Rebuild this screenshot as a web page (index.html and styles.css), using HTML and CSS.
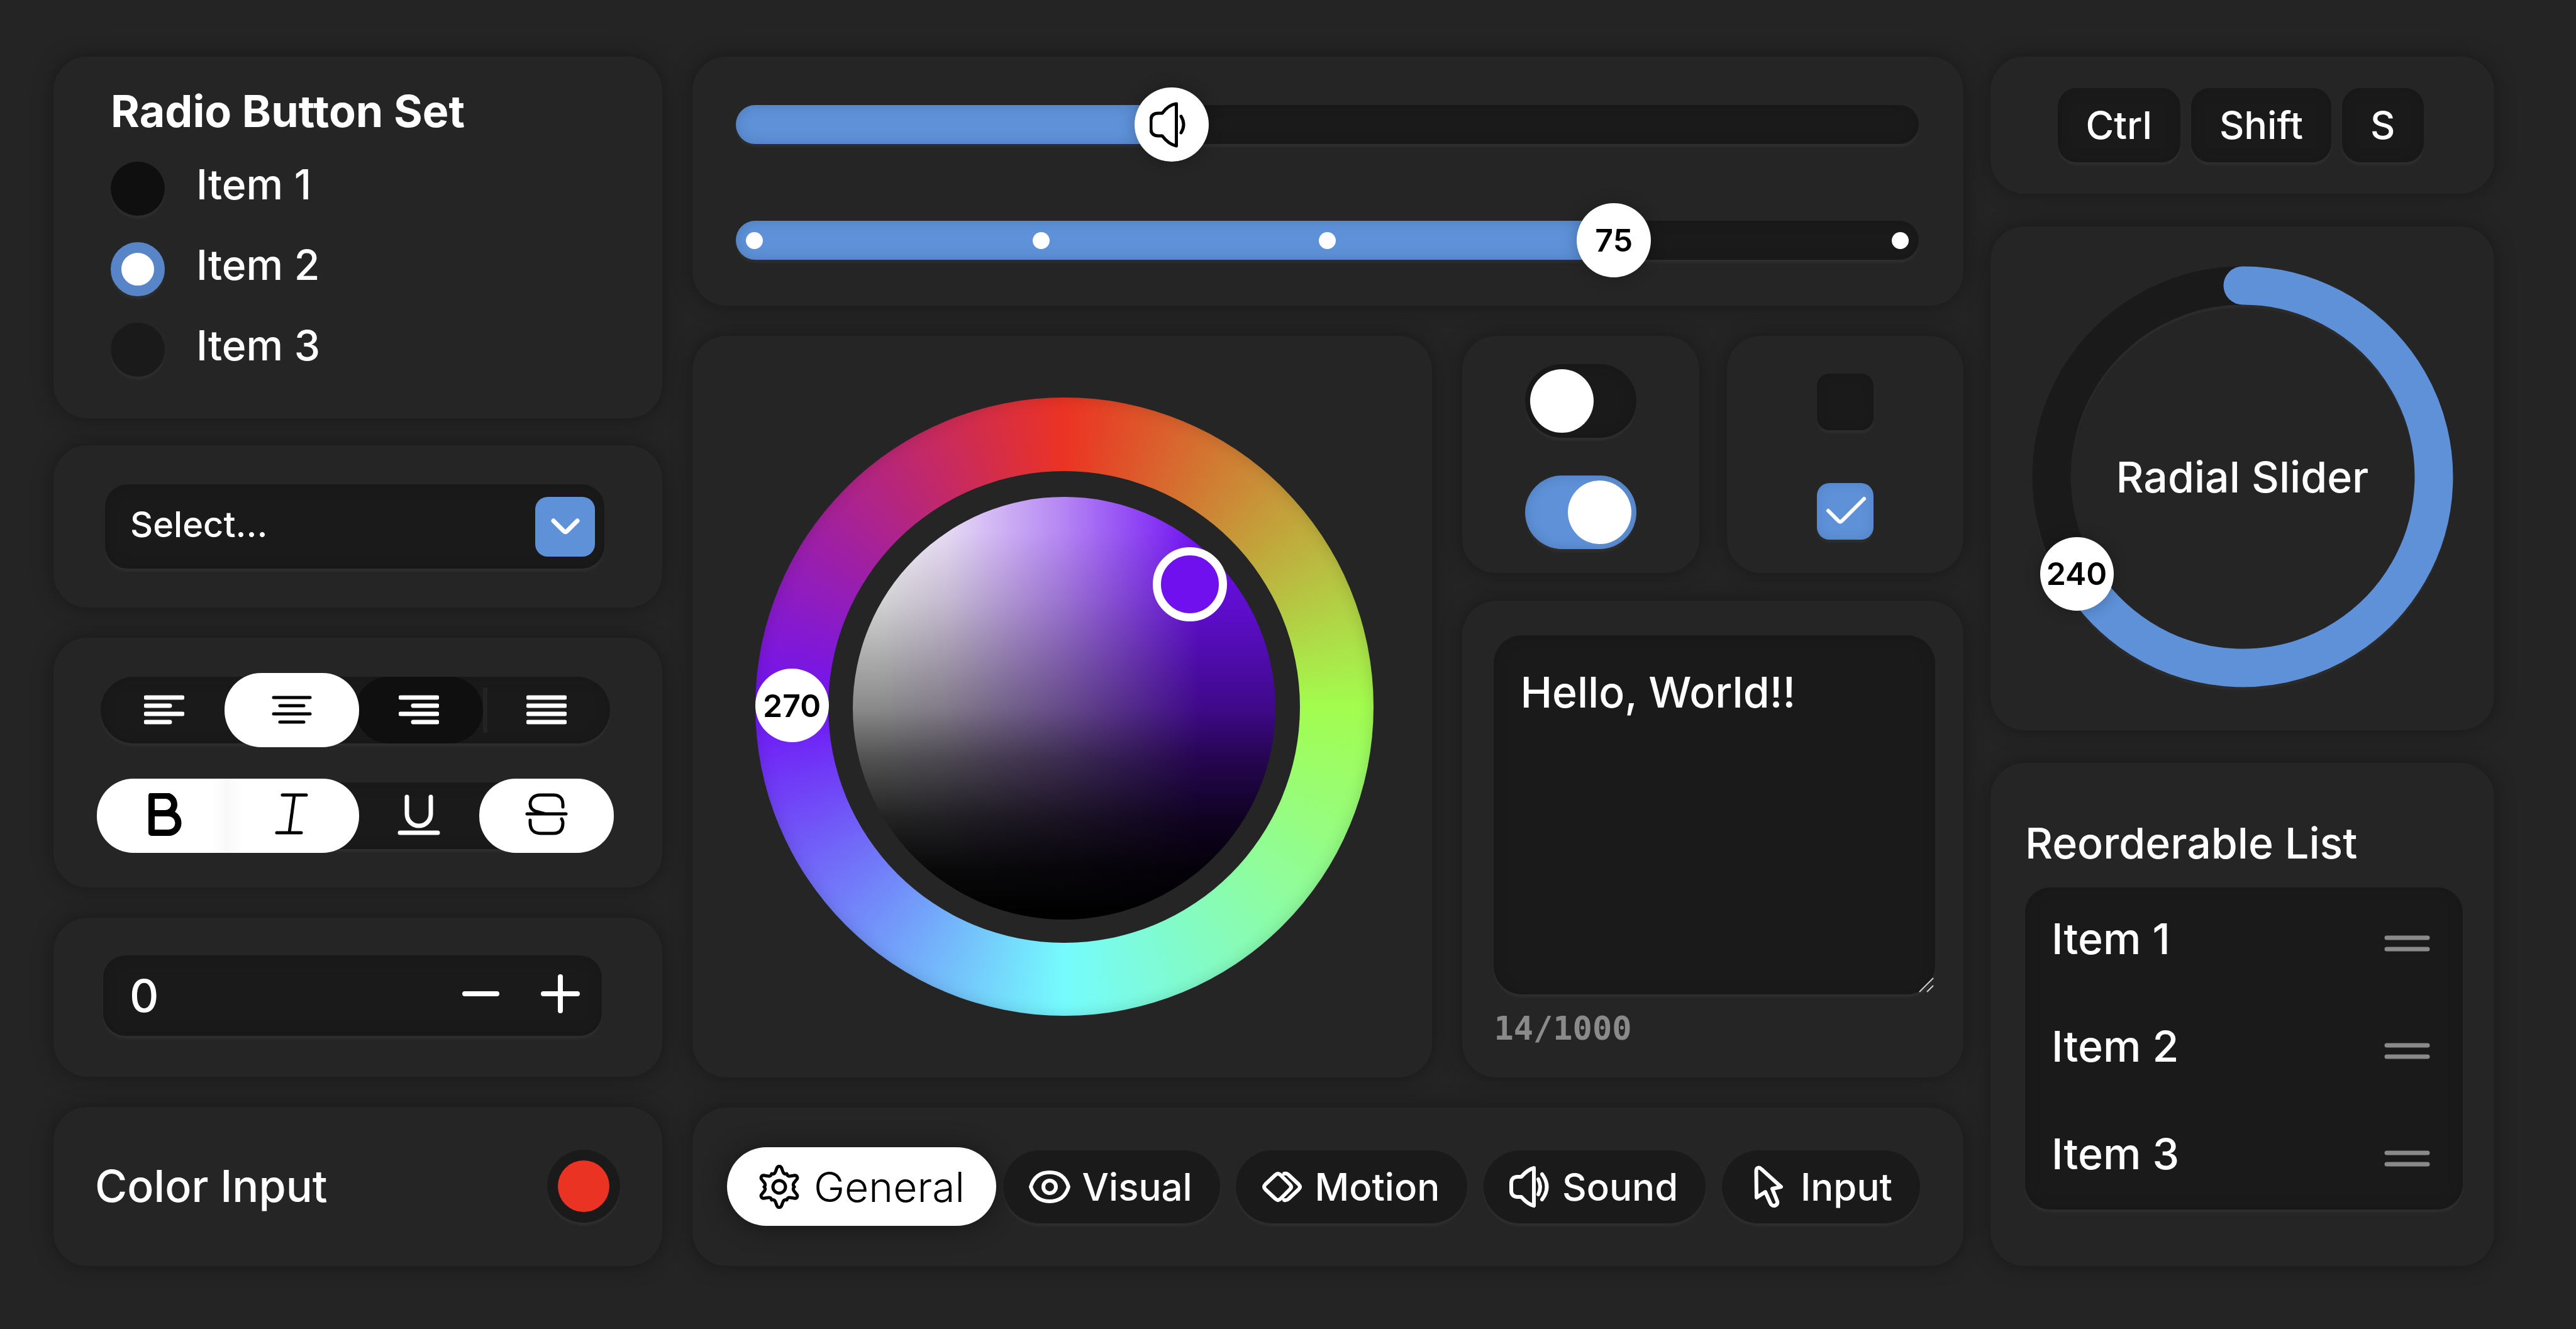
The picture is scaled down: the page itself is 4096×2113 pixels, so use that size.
FILE: index.html
```html
<!DOCTYPE html>
<html lang="en">
<head>
<meta charset="utf-8">
<title>Component Kit</title>
<link rel="stylesheet" href="styles.css">
</head>
<body>
<main class="board">
  <div class="column column-left">
    <div class="stack-top">
      <section class="card radio-card" role="radiogroup" aria-labelledby="radio-title">
        <div class="radio-title" id="radio-title">Radio Button Set</div>
        <label class="radio-row"><input class="radio is-hover" type="radio" name="set"><span class="radio-text">Item 1</span></label>
        <label class="radio-row"><input class="radio" type="radio" name="set" checked><span class="radio-text">Item 2</span></label>
        <label class="radio-row"><input class="radio" type="radio" name="set"><span class="radio-text">Item 3</span></label>
      </section>

      <section class="card select-card">
        <div class="select-wrap">
          <select class="select well" aria-label="Select">
            <option>Select...</option>
          </select>
          <span class="select-arrow">
            <svg width="46" height="28" viewBox="0 0 46 28" fill="none" stroke="#fff" stroke-width="7" stroke-linecap="round" stroke-linejoin="round"><path d="M4 5 L20 21 Q23 24 26 21 L42 5"/></svg>
          </span>
        </div>
      </section>
    </div>

    <section class="card format-card">
      <div class="segments well">
        <button class="segment" type="button" aria-label="Align left"><svg class="icon-align" viewBox="0 0 64 48"><path d="M3 4H61M3 17H41M3 30H61M3 43H41"/></svg></button>
        <button class="segment is-on" type="button" aria-label="Align center"><svg class="icon-align" viewBox="0 0 64 48"><path d="M3 4H61M13 17H51M3 30H61M13 43H51"/></svg></button>
        <button class="segment is-hover" type="button" aria-label="Align right"><svg class="icon-align" viewBox="0 0 64 48"><path d="M3 4H61M23 17H61M3 30H61M23 43H61"/></svg></button>
        <button class="segment has-divider" type="button" aria-label="Justify"><svg class="icon-align" viewBox="0 0 64 48"><path d="M3 4H61M3 17H61M3 30H61M3 43H61"/></svg></button>
      </div>
      <div class="segments well">
        <button class="segment is-on joins-next" type="button" aria-label="Bold"><svg class="icon-format icon-bold" viewBox="0 0 68 72"><path d="M14 4H36a14 14 0 0 1 0 28H14M36 32H41a15 15 0 0 1 0 31H14V4"/></svg></button>
        <button class="segment is-on joins-previous" type="button" aria-label="Italic"><svg class="icon-format" viewBox="0 0 68 72"><path d="M19 3H57M10 63H49M38 3L30 63"/></svg></button>
        <button class="segment" type="button" aria-label="Underline"><svg class="icon-format" viewBox="0 0 68 72"><path d="M15 6V33a19 19 0 0 0 38 0V6M4 63H64"/></svg></button>
        <button class="segment is-on" type="button" aria-label="Strikethrough"><svg class="icon-format" viewBox="0 0 68 72"><path d="M3 33H65M60 22V18C60 8 54 3 45 3H24C14 3 8 9 8 17C8 23 11 27 17 29L32 33M8 43V47C8 58 14 64 24 64H45C55 64 60 58 60 47C60 44 59 43 58 41"/></svg></button>
      </div>
    </section>

    <section class="card number-card">
      <div class="number well">
        <input class="number-input" type="text" inputmode="numeric" value="0" aria-label="Number">
        <button class="step" type="button" aria-label="Decrease"><svg width="62" height="62" viewBox="0 0 62 62"><path d="M5 31H56"/></svg></button>
        <button class="step" type="button" aria-label="Increase"><svg width="62" height="62" viewBox="0 0 62 62"><path d="M4 31H58M31 4V58"/></svg></button>
      </div>
    </section>

    <section class="card color-card">
      <label class="color-label" for="color">Color Input</label>
      <input class="color-input" id="color" type="color" value="#eb3323">
    </section>
  </div>

  <div class="column column-middle">
    <section class="card sliders-card">
      <div class="slider" style="--p: 0.3645">
        <input class="slider-input" type="range" min="0" max="100" step="0.05" value="36.45" aria-label="Volume">
        <span class="slider-value">
          <svg width="70" height="76" viewBox="0 0 70 76" fill="none" stroke="#000" stroke-width="5" stroke-linecap="round" stroke-linejoin="round"><path d="M42.500 5C33 6 26 12 20 20H14C6 20 2 24 2 31V45C2 52 6 56 14 56H20C26 64 33 70 42.500 72Z"/><path d="M50 25Q58 38 50 51"/></svg>
        </span>
      </div>
      <div class="slider" style="--p: 0.75">
        <div class="ticks"><i class="tick"></i><i class="tick"></i><i class="tick"></i><i class="tick"></i><i class="tick"></i></div>
        <input class="slider-input" type="range" min="0" max="100" step="25" value="75" aria-label="Stepped value">
        <output class="slider-value">75</output>
      </div>
    </section>

    <div class="middle-row">
      <section class="card wheel-card">
        <div class="wheel">
          <div class="wheel-hole">
            <div class="wheel-disc"></div>
          </div>
          <input class="ghost-range" type="range" min="0" max="360" value="270" aria-label="Hue">
          <span class="wheel-picker"></span>
          <output class="wheel-hue thumb">270</output>
        </div>
      </section>

      <div class="side">
        <div class="toggle-row">
          <section class="card switch-card">
            <input class="switch" type="checkbox" role="switch" aria-label="Switch A">
            <input class="switch" type="checkbox" role="switch" aria-label="Switch B" checked>
          </section>
          <section class="card check-card">
            <span class="check-wrap"><input class="check" type="checkbox" aria-label="Option A"></span>
            <span class="check-wrap"><input class="check" type="checkbox" aria-label="Option B" checked>
              <svg class="check-mark" viewBox="0 0 90 90"><path d="M18 44L34 60Q37 63 40 60L75 25"/></svg></span>
          </section>
        </div>
        <section class="card text-card">
          <div class="text-wrap">
            <textarea class="textarea well" aria-label="Message">Hello, World!!</textarea>
            <svg class="grip" viewBox="0 0 26 26"><path d="M2 24L24 2M14 24L24 14"/></svg>
          </div>
          <div class="counter">14/1000</div>
        </section>
      </div>
    </div>

    <nav class="card tabs-card">
      <button class="tab is-active" type="button"><svg class="tab-icon" viewBox="0 0 70 70"><g id="teeth"><path d="M23 14.200C27 15.500 29 12.500 30 8.500L31.500 4.500C33 1.500 37 1.500 38.500 4.500L40 8.500C41 12.500 43 15.500 47 14.200"/><path transform="rotate(60 35 35)" d="M23 14.200C27 15.500 29 12.500 30 8.500L31.500 4.500C33 1.500 37 1.500 38.500 4.500L40 8.500C41 12.500 43 15.500 47 14.200"/><path transform="rotate(120 35 35)" d="M23 14.200C27 15.500 29 12.500 30 8.500L31.500 4.500C33 1.500 37 1.500 38.500 4.500L40 8.500C41 12.500 43 15.500 47 14.200"/></g><use href="#teeth" transform="rotate(180 35 35)"/><circle cx="35" cy="35" r="10"/></svg>General</button>
      <button class="tab" type="button"><svg class="tab-icon" viewBox="0 0 70 70"><path d="M5 35C10 18 22 12 35 12S60 18 65 35C60 52 48 58 35 58S10 52 5 35Z"/><circle cx="35" cy="35" r="10"/></svg>Visual</button>
      <button class="tab" type="button"><svg class="tab-icon" viewBox="0 0 70 70"><path d="M24 16L8 31Q4 35 8 39L24 54Q28 58 32 54L47 39Q51 35 47 31L32 16Q28 12 24 16ZM38 14Q42 13 45 16L61 31Q65 35 61 39L45 54Q42 57 38 56"/></svg>Motion</button>
      <button class="tab" type="button"><svg class="tab-icon" viewBox="0 0 70 70"><path d="M41 5C33 7 27 12 21 19H15C8 19 5 23 5 29V41C5 47 8 51 15 51H21C27 58 33 63 41 65ZM48 23Q54 35 48 47M54 15Q69 35 54 55"/></svg>Sound</button>
      <button class="tab" type="button"><svg class="tab-icon" viewBox="0 0 70 70"><path d="M15.500 10C15.500 4 20 3 24 7L55 35L41 38L49 58C51 65 41 68 38 61L30 43L16 52Z"/></svg>Input</button>
    </nav>
  </div>

  <div class="column column-right">
    <section class="card keys-card">
      <kbd class="key well">Ctrl</kbd><kbd class="key well">Shift</kbd><kbd class="key well">S</kbd>
    </section>

    <section class="card radial-card">
      <div class="radial">
        <svg class="radial-ring" viewBox="0 0 670 670" fill="none">
          <circle class="ring-edge" cx="335" cy="335" r="304"/>
          <circle class="ring-track" cx="335" cy="335" r="304"/>
          <path class="ring-fill" d="M335 31A304 304 0 1 1 71.700 487"/>
        </svg>
        <label class="radial-label" for="radial">Radial Slider</label>
        <input class="ghost-range" id="radial" type="range" min="0" max="360" value="240">
        <output class="radial-value thumb">240</output>
      </div>
    </section>

    <section class="card list-card">
      <div class="list-title">Reorderable List</div>
      <ul class="list well">
        <li class="list-item"><span class="list-text">Item 1</span><svg class="handle" viewBox="0 0 73 26"><path d="M4 4H69M4 22H69"/></svg></li>
        <li class="list-item"><span class="list-text">Item 2</span><svg class="handle" viewBox="0 0 73 26"><path d="M4 4H69M4 22H69"/></svg></li>
        <li class="list-item"><span class="list-text">Item 3</span><svg class="handle" viewBox="0 0 73 26"><path d="M4 4H69M4 22H69"/></svg></li>
      </ul>
    </section>
  </div>
</main>
</body>
</html>
```

FILE: styles.css
```css
:root {
  --page: #242424;
  --card: #252525;
  --well: #1a1a1a;
  --well-hover: #0f0f0f;
  --accent: #5e91d8;
  --text: #fff;
  --muted: #8a8a8a;
  --lip: 0 5px 3px rgba(255, 255, 255, 0.04);
}

* { box-sizing: border-box; }

body {
  margin: 0;
  background: var(--page);
  color: var(--text);
  font: 500 68px/84px Inter, "Open Sans", sans-serif;
}

button, input, select, textarea, kbd {
  margin: 0;
  border: 0;
  color: inherit;
  font: inherit;
}

/* Page grid */
.board {
  display: grid;
  grid-template-columns: 973fr 2021fr 801fr;
  gap: 43px;
  min-height: 100vh;
  padding: 90px 130px 100px 85px;
}

.column { display: grid; min-width: 0; }
.column-left { grid-template: 876fr 396fr 253fr 253fr / minmax(0, 1fr); gap: 48px; padding-right: 5px; }
.column-middle { grid-template-rows: 396fr 1178fr 252fr; gap: 48px; }
.column-right { grid-template-rows: 218fr 800fr 800fr; gap: 52px; }
.stack-top { display: grid; grid-template-rows: 575fr 258fr; gap: 43px; }

.card {
  min-width: 0;
  border-radius: 54px;
  background: var(--card);
  box-shadow: 0 0 32px rgba(0, 0, 0, 0.36);
}

.well {
  background: var(--well);
  box-shadow: inset 0 0 24px rgba(0, 0, 0, 0.12), var(--lip);
}

.thumb {
  display: grid;
  place-items: center;
  width: 117px;
  height: 117px;
  border-radius: 50%;
  background: #fff;
  color: #000;
  font-size: 50px;
  font-weight: 600;
}

/* Radio set */
.radio-card { padding: 45px 91px 0; }
.radio-title { margin-bottom: 17px; font-size: 70px; font-weight: 700; }
.radio-row { display: flex; align-items: center; gap: 50px; height: 128px; font-size: 66px; }
.radio-text { padding-bottom: 14px; }
.radio {
  appearance: none;
  width: 86px;
  height: 86px;
  border-radius: 50%;
  background: var(--well);
  box-shadow: var(--lip);
}
.radio.is-hover { background: var(--well-hover); }
.radio:checked { border: 17px solid #5785c8; background: #fff; }

/* Select */
.select-card { display: grid; align-items: center; padding: 0 92px 0 82px; }
.select-wrap { display: grid; align-items: center; }
.select {
  grid-area: 1 / 1;
  appearance: none;
  height: 134px;
  padding: 0 120px 6px 40px;
  border-radius: 36px;
  font-size: 56px;
}
.select-arrow {
  grid-area: 1 / 1;
  justify-self: end;
  display: grid;
  place-items: center;
  width: 95px;
  height: 95px;
  margin-right: 15px;
  border-radius: 20px;
  background: var(--accent);
  pointer-events: none;
}

/* Segmented buttons */
.format-card { display: grid; align-content: center; gap: 62px; padding: 0 83px 0 75px; }
.segments { display: grid; grid-template-columns: repeat(4, 1fr); height: 106px; border-radius: 53px; }
.segment {
  display: grid;
  place-items: center;
  padding: 0;
  border-radius: 58px;
  background: none;
  stroke: #fff;
}
.segment.is-on { z-index: 1; margin: -6px; background: #fff; stroke: #000; }
.segment.is-hover { background: var(--well-hover); }
.segment.joins-next {
  border-radius: 58px 0 0 58px;
  background: linear-gradient(to right, #fff calc(100% - 36px), #f8f8f8);
}
.segment.joins-previous {
  border-radius: 0 58px 58px 0;
  background: linear-gradient(to left, #fff calc(100% - 30px), #f8f8f8);
}
.segment.has-divider {
  background: linear-gradient(#232323, #232323) left center / 7px 72px no-repeat;
  border-radius: 0;
}
.icon-align { width: 64px; height: 48px; fill: none; stroke-width: 7; stroke-linecap: round; }
.icon-format { width: 68px; height: 72px; fill: none; stroke-width: 7; stroke-linecap: round; stroke-linejoin: round; }
.is-on .icon-align, .is-on .icon-format { stroke-width: 5; }
.is-on .icon-bold { stroke-width: 10; }

/* Number stepper */
.number-card { display: grid; grid-template-columns: minmax(0, 1fr); align-items: center; padding: 0 96px 4px 79px; }
.number { display: flex; align-items: center; gap: 64px; height: 128px; padding: 0 35px 0 42px; border-radius: 36px; }
.number-input { flex: 1; min-width: 0; padding: 0; background: none; outline: 0; font-size: 72px; }
.step { display: grid; place-items: center; padding: 0 0 6px; background: none; }
.step svg { fill: none; stroke: #fff; stroke-width: 8; stroke-linecap: round; }

/* Color input */
.color-card { display: flex; align-items: center; justify-content: space-between; padding: 0 67px 0 66px; }
.color-label { font-size: 70px; }
.color-input {
  appearance: none;
  width: 116px;
  height: 116px;
  padding: 17px;
  border-radius: 50%;
  background: var(--well);
  box-shadow: var(--lip);
}
.color-input::-webkit-color-swatch-wrapper { padding: 0; }
.color-input::-webkit-color-swatch { border: 0; border-radius: 50%; }

/* Sliders */
.sliders-card { display: grid; align-content: center; gap: 122px; padding: 4px 71px 0 69px; }
.slider {
  position: relative;
  display: grid;
  grid-template-rows: 62px;
  align-items: center;
  height: 62px;
  border-radius: 31px;
  background: linear-gradient(to right, var(--accent) calc(29px + (100% - 58px) * var(--p)), var(--well) 0);
  box-shadow: inset 0 0 20px rgba(0, 0, 0, 0.15), var(--lip);
}
.ticks { grid-area: 1 / 1; display: flex; justify-content: space-between; padding: 0 16px; }
.tick { width: 27px; height: 27px; border-radius: 50%; background: #fff; }
.slider-input {
  grid-area: 1 / 1;
  appearance: none;
  width: calc(100% + 60px);
  height: 118px;
  margin: 0 -30px;
  background: none;
}
.slider-input::-webkit-slider-thumb {
  appearance: none;
  width: 118px;
  height: 118px;
  border-radius: 50%;
  background: #fff;
  box-shadow: 0 0 24px rgba(0, 0, 0, 0.25);
}
.slider-value {
  position: absolute;
  left: calc(29px + (100% - 58px) * var(--p));
  display: grid;
  place-items: center;
  width: 118px;
  height: 118px;
  margin-left: -59px;
  color: #000;
  font-size: 50px;
  font-weight: 600;
  pointer-events: none;
}

/* Color wheel */
.middle-row { display: grid; grid-template-columns: 1177fr 797fr; gap: 48px; min-width: 0; }
.wheel-card { display: grid; place-items: center; padding-left: 6px; }
.wheel {
  position: relative;
  display: grid;
  place-items: center;
  width: 983px;
  height: 983px;
  border-radius: 50%;
  background: conic-gradient(#eb3323, #a2fd4e 90deg, #75fbfd 180deg, #6f14f5 270deg, #eb3323);
  box-shadow: inset 0 0 24px rgba(0, 0, 0, 0.15);
}
.wheel-hole {
  display: grid;
  place-items: center;
  width: 750px;
  height: 750px;
  padding-top: 4px;
  border-radius: 50%;
  background: var(--card);
}
.wheel-disc {
  width: 672px;
  height: 672px;
  border-radius: 50%;
  background:
    linear-gradient(rgba(0, 0, 0, 0) 8%, rgba(0, 0, 0, 0.15) 25%, rgba(0, 0, 0, 0.44) 50%, rgba(0, 0, 0, 0.67) 62%, rgba(0, 0, 0, 0.86) 76%, rgba(0, 0, 0, 0.96) 88%, #000),
    linear-gradient(to right, #f6f6f6 6%, #e6daf4 22%, #b484f4 50%, #7010f4 82%);
}
.wheel-picker {
  position: absolute;
  left: 632px;
  top: 238px;
  width: 118px;
  height: 118px;
  border: 13px solid #fff;
  border-radius: 50%;
  background: #7010ee;
}
.wheel-hue { position: absolute; left: 0; top: 431px; }
.ghost-range { position: absolute; inset: 0; width: 100%; height: 100%; opacity: 0; }

/* Switches and check boxes */
.side { display: grid; grid-template-rows: 377fr 757fr; gap: 44px; min-width: 0; }
.toggle-row { display: grid; grid-template-columns: 1fr 1fr; gap: 44px; }
.switch-card, .check-card { display: grid; place-content: center; padding-top: 6px; }
.switch-card { gap: 60px; }
.check-card { gap: 84px; }
.switch {
  appearance: none;
  display: flex;
  align-items: center;
  width: 177px;
  height: 117px;
  padding: 0 8px;
  border-radius: 59px;
  background: var(--well);
  box-shadow: inset 0 0 20px rgba(0, 0, 0, 0.15), var(--lip);
}
.switch::before { content: ""; width: 101px; height: 101px; border-radius: 50%; background: #fff; }
.switch:checked { justify-content: flex-end; background: var(--accent); }
.check-wrap { display: grid; }
.check {
  grid-area: 1 / 1;
  appearance: none;
  width: 90px;
  height: 90px;
  border-radius: 20px;
  background: var(--well);
  box-shadow: inset 0 0 20px rgba(0, 0, 0, 0.1), var(--lip);
}
.check:checked { background: var(--accent); }
.check-mark {
  grid-area: 1 / 1;
  width: 90px;
  height: 90px;
  fill: none;
  stroke: #fff;
  stroke-width: 6;
  stroke-linecap: round;
  pointer-events: none;
}

/* Text area */
.text-card { display: flex; flex-direction: column; gap: 24px; padding: 55px 45px 48px 50px; }
.text-wrap { position: relative; flex: 1; display: grid; }
.textarea { padding: 48px 42px; border-radius: 45px; outline: 0; resize: none; }
.grip { position: absolute; right: 1px; bottom: 2px; width: 26px; height: 26px; fill: none; stroke: #d0d0d0; stroke-width: 2; }
.counter { color: var(--muted); font: 700 52px/60px "DejaVu Sans Mono", monospace; }

/* Tabs */
.tabs-card { display: flex; align-items: center; justify-content: space-between; padding: 0 69px; }
.tab {
  display: flex;
  align-items: center;
  gap: 16px;
  height: 116px;
  padding: 0 44px 0 39px;
  border-radius: 63px;
  background: var(--well);
  box-shadow: var(--lip);
  font-size: 60px;
}
.tab.is-active {
  gap: 20px;
  height: 125px;
  margin: 0 -14px;
  padding: 0 50px 0 48px;
  background: #fff;
  box-shadow: 0 2px 40px rgba(0, 0, 0, 0.4);
  color: #000;
  font-size: 66px;
  font-weight: 300;
}
.tab-icon { width: 70px; height: 70px; fill: none; stroke: currentColor; stroke-width: 6; stroke-linecap: round; stroke-linejoin: round; }
.is-active .tab-icon { stroke-width: 5; }

/* Keyboard keys */
.keys-card { display: flex; align-items: center; justify-content: center; gap: 17px; padding-right: 6px; }
.key { padding: 17px 45px; border-radius: 30px; font-size: 61px; }

/* Radial slider */
.radial-card { display: grid; place-items: center; padding-bottom: 5px; }
.radial { position: relative; display: grid; place-items: center; }
.radial-ring { grid-area: 1 / 1; width: 670px; height: 670px; overflow: visible; }
.ring-edge { stroke: #2b2b2b; stroke-width: 61; transform: translateY(5px); }
.ring-track { stroke: var(--well); stroke-width: 61; }
.ring-fill { stroke: var(--accent); stroke-width: 61; stroke-linecap: round; }
.radial-label { grid-area: 1 / 1; }
.radial-value { position: absolute; left: 13px; top: 431px; box-shadow: 0 0 24px rgba(0, 0, 0, 0.25); }

/* Reorderable list */
.list-card { display: flex; flex-direction: column; gap: 29px; padding: 85px 50px 90px 55px; }
.list { flex: 1; display: grid; grid-auto-rows: 1fr; margin: 0; padding: 0 52px 0 42px; border-radius: 40px; list-style: none; }
.list-item { display: flex; align-items: center; justify-content: space-between; }
.list-text { padding-bottom: 8px; }
.handle { width: 73px; height: 34px; padding-top: 8px; fill: none; stroke: var(--muted); stroke-width: 7; stroke-linecap: round; }
```
